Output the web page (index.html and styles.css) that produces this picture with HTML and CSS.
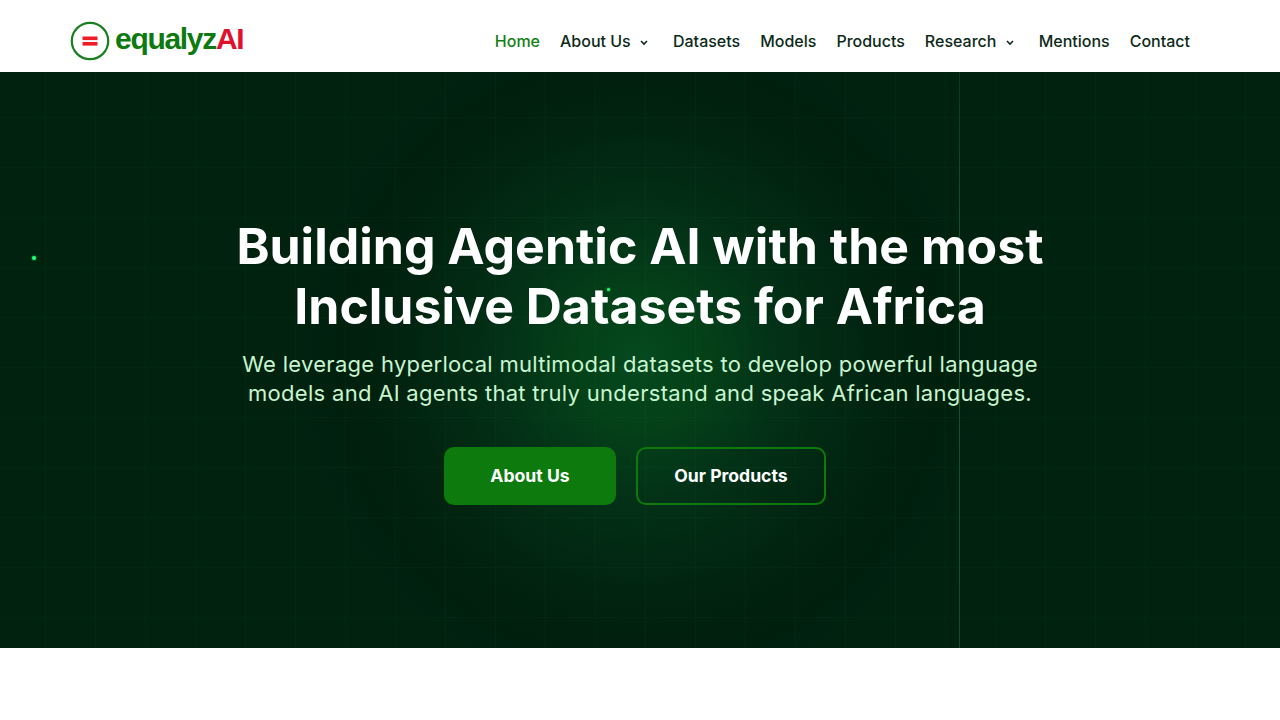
FILE: index.html
```html
<!DOCTYPE html>
<html>
<head>
  <title>equalyzAI</title>
  <link rel="stylesheet" href="styles.css">
</head>
<body>
  <header class="site-header">
    <a class="logo" href="#">
      <svg class="logo-mark" width="40" height="40" viewBox="0 0 40 40">
        <circle cx="20" cy="20" r="18.2" fill="none" stroke="#1a801f" stroke-width="2.2"/>
        <rect x="12.5" y="15.5" width="15" height="3.6" fill="#ee1c25"/>
        <rect x="12.5" y="21" width="15" height="3.6" fill="#ee1c25"/>
      </svg>
      <span class="logo-text">equalyz<span class="logo-ai">AI</span></span>
    </a>
    <nav class="main-nav">
      <a class="active" href="#">Home</a>
      <a class="has-sub" href="#">About Us
        <svg width="8" height="6" viewBox="0 0 8 6"><path d="M1 1l3 3 3-3" fill="none" stroke="#0c2a18" stroke-width="1.6"/></svg>
      </a>
      <a href="#">Datasets</a>
      <a href="#">Models</a>
      <a href="#">Products</a>
      <a class="has-sub" href="#">Research
        <svg width="8" height="6" viewBox="0 0 8 6"><path d="M1 1l3 3 3-3" fill="none" stroke="#0c2a18" stroke-width="1.6"/></svg>
      </a>
      <a href="#">Mentions</a>
      <a href="#">Contact</a>
    </nav>
  </header>

  <section class="hero">
    <div class="beam"></div>
    <div class="dot dot-left"></div>
    <div class="dot dot-mid"></div>
    <div class="hero-content">
      <h1>Building Agentic AI with the most<br>Inclusive Datasets for Africa</h1>
      <p>We leverage hyperlocal multimodal datasets to develop powerful language<br>models and AI agents that truly understand and speak African languages.</p>
      <div class="hero-buttons">
        <a class="btn btn-solid" href="#">About Us</a>
        <a class="btn btn-outline" href="#">Our Products</a>
      </div>
    </div>
  </section>
</body>
</html>
```

FILE: styles.css
```css
:root {
  --color-dark: #00220f;
  --color-green: #0c7a0c;
  --color-ink: #0c2a18;
  --hero-font: "Inter", "Liberation Sans", sans-serif;
}

html, body {
  margin: 0;
  padding: 0;
  background: #fff;
  font-family: var(--hero-font);
}

a {
  text-decoration: none;
}

.site-header {
  height: 72px;
  box-sizing: border-box;
  padding: 10px 90px 0 70px;
  display: flex;
  align-items: center;
  justify-content: space-between;
  background: #fff;
}

.logo {
  display: flex;
  align-items: center;
  gap: 5px;
}

.logo-text {
  margin-bottom: 4px;
  font-family: "Liberation Sans", sans-serif;
  font-weight: 700;
  font-size: 30px;
  letter-spacing: -1.3px;
  color: #0d7a10;
}

.logo-ai {
  color: #e0112b;
}

.main-nav {
  display: flex;
  align-items: center;
  gap: 20px;
  font-size: 16px;
  font-weight: 500;
}

.main-nav a {
  color: var(--color-ink);
}

.main-nav a.active {
  color: #148014;
}

.main-nav a.has-sub svg {
  margin: 0 5px 1px 5px;
}

.hero {
  position: relative;
  height: 576px;
  overflow: hidden;
  display: flex;
  align-items: center;
  justify-content: center;
  background-color: var(--color-dark);
  background-image:
    linear-gradient(rgba(40, 150, 70, 0.05) 1px, transparent 1px),
    linear-gradient(90deg, rgba(40, 150, 70, 0.05) 1px, transparent 1px),
    radial-gradient(circle 340px at 50% 50%, #05481f 0, #044219 60px, #033117 140px, #012410 230px, #01200e 285px, var(--color-dark) 340px);
  background-size: 50px 50px, 50px 50px, 100% 100%;
  background-position: 45px 45px, 45px 45px, 0 0;
}

.beam {
  position: absolute;
  top: 0;
  bottom: 0;
  left: 959px;
  width: 1px;
  background: linear-gradient(rgba(50, 180, 100, 0.15), rgba(50, 180, 100, 0.35) 30%, rgba(50, 180, 100, 0.3));
}

.dot {
  position: absolute;
  width: 3px;
  height: 3px;
  border-radius: 50%;
  background: #1dff6e;
  box-shadow: 0 0 2px #1dff6e;
}

.dot-left {
  left: 32px;
  top: 184px;
  width: 4px;
  height: 4px;
}

.dot-mid {
  left: 607px;
  top: 216px;
}

.hero-content {
  position: relative;
  text-align: center;
  color: #fff;
}

.hero-content h1 {
  margin: 0 0 14px;
  font-size: 50px;
  line-height: 60px;
  font-weight: 700;
}

.hero-content p {
  margin: 0 0 39px;
  font-size: 22px;
  line-height: 29px;
  letter-spacing: 0.3px;
  color: #c8f5d0;
}

.hero-buttons {
  display: flex;
  justify-content: center;
  gap: 20px;
  padding-right: 10px;
}

.btn {
  height: 58px;
  box-sizing: border-box;
  display: flex;
  align-items: center;
  justify-content: center;
  border-radius: 10px;
  font-size: 17.6px;
  font-weight: 700;
  color: #fff;
}

.btn-solid {
  width: 172px;
  background: var(--color-green);
}

.btn-outline {
  width: 190px;
  border: 2px solid var(--color-green);
}
```
